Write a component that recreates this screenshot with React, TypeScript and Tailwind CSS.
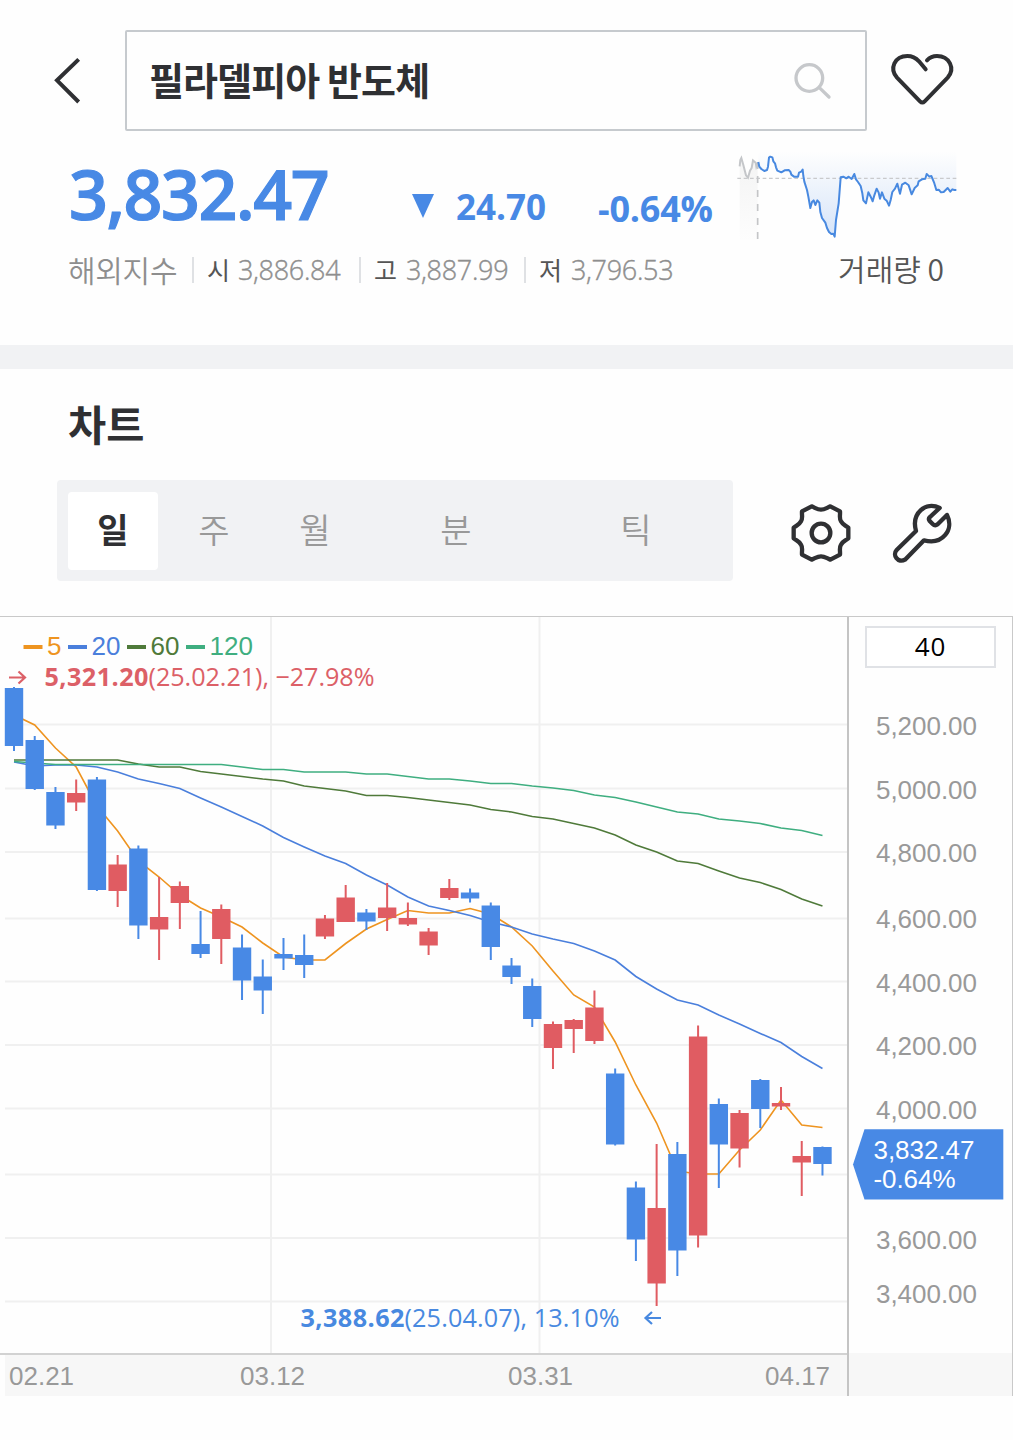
import { useState } from "react";

// [direction, high, body top, body bottom, low]
type Candle = ["up" | "down", number, number, number, number];

const candles: Candle[] = [
    ["down", 687, 688, 746, 751],
    ["down", 736, 740, 789, 790],
    ["down", 787, 792, 825.5, 829],
    ["up", 779.5, 793, 802.5, 811],
    ["down", 777, 779.5, 890, 891],
    ["up", 855, 864.5, 891, 907],
    ["down", 845.5, 848.5, 925.5, 939],
    ["up", 877, 917, 929.5, 960],
    ["up", 881.5, 886, 903, 929],
    ["down", 911, 944, 954, 958],
    ["up", 904.5, 909, 939, 964],
    ["down", 934.5, 947.5, 980.5, 1000],
    ["down", 959.5, 976.5, 990.5, 1014],
    ["down", 938, 954, 958.5, 970],
    ["down", 934.5, 955, 965, 978],
    ["up", 915, 918.5, 936.5, 939],
    ["up", 885, 897.5, 922, 922],
    ["down", 909, 912.5, 921.5, 930],
    ["up", 883, 907.5, 918, 931],
    ["up", 902.5, 918, 924.5, 926],
    ["up", 928, 931.5, 945.5, 955],
    ["up", 879, 888, 898, 900],
    ["down", 888.5, 892.5, 898.5, 902.5],
    ["down", 902.5, 905.5, 947, 960],
    ["down", 958, 965.5, 977, 984],
    ["down", 978.5, 986, 1019, 1027],
    ["up", 1021.5, 1024, 1048, 1069],
    ["up", 1019, 1020, 1029, 1053],
    ["up", 990.5, 1007.5, 1041, 1044],
    ["down", 1068.5, 1073.5, 1144.5, 1145.5],
    ["down", 1181.5, 1187.5, 1239.5, 1261],
    ["up", 1144, 1208, 1283.5, 1306],
    ["down", 1142, 1154, 1250.5, 1276],
    ["up", 1025.5, 1036.5, 1235.5, 1247.5],
    ["down", 1098.5, 1104, 1144.5, 1188],
    ["up", 1110, 1113, 1148.5, 1167.5],
    ["down", 1079, 1080, 1109, 1128],
    ["up", 1087, 1103, 1106.5, 1110],
    ["up", 1141, 1156, 1162.5, 1196],
    ["down", 1146.5, 1147, 1164, 1175.5],
];

const averages = [
    {
        period: "5", color: "#ee9420", swatch: 23.5, label: 47,
        points: [715, 725, 748, 767, 806, 831, 861, 877, 895, 908, 917, 927, 943, 957, 960, 960, 943.5, 929, 919.5, 910.5, 913, 913, 908.5, 914, 927, 946, 971, 995, 1007, 1042, 1085, 1123, 1171, 1174, 1174, 1150, 1130, 1100, 1125, 1127.5],
    },
    {
        period: "20", color: "#4a7fdc", swatch: 68, label: 91.5,
        points: [762, 766, 765, 765, 767, 772, 779, 783.5, 788.5, 798, 807, 816.5, 826, 837.5, 847, 856, 863.5, 875, 885, 897, 906, 910.5, 915.5, 922, 927, 934, 939, 943.5, 951, 960, 976.5, 989, 1000, 1005, 1015, 1024, 1033.5, 1042.5, 1056.5, 1068.5],
    },
    {
        period: "60", color: "#4f7a3a", swatch: 127, label: 150.5,
        points: [760, 760, 760, 760, 760, 760, 764, 767, 767, 771.5, 774, 776.5, 779, 781, 786, 788.5, 791, 795.5, 795.5, 797.5, 800, 802.5, 805, 809.5, 812, 816.5, 819, 823.5, 828, 835, 845, 852, 861, 863.5, 871, 878, 882.5, 889.5, 899, 906],
    },
    {
        period: "120", color: "#3fae80", swatch: 186, label: 209.5,
        points: [761.5, 763, 764.5, 764.5, 764.5, 764.5, 764.5, 764.5, 764.5, 764.5, 764.5, 767, 769.5, 769.5, 772, 772, 772, 774, 774, 776.5, 779, 779, 781, 783.5, 783.5, 786, 788, 790.5, 795, 797.5, 802, 807, 812, 814, 819, 821, 823.5, 828, 830.5, 835.5],
    },
];

const gridRows = [724.5, 788.5, 852, 918.5, 981.5, 1045, 1108.5, 1174.5, 1238, 1301.5];
const gridCols = [271, 539.5];

const priceTicks = [
    { label: "5,200.00", y: 735 },
    { label: "5,000.00", y: 799 },
    { label: "4,800.00", y: 862 },
    { label: "4,600.00", y: 928 },
    { label: "4,400.00", y: 992 },
    { label: "4,200.00", y: 1055 },
    { label: "4,000.00", y: 1119 },
    { label: "3,600.00", y: 1248.5 },
    { label: "3,400.00", y: 1303 },
];

const tabs = [
    { label: "일", width: "w-[90px]" },
    { label: "주", width: "w-[112px]" },
    { label: "월", width: "w-[90px]" },
    { label: "분", width: "w-[192px]" },
    { label: "틱", width: "w-[168px]" },
];

const candleX = (i: number) => 14 + i * 20.73;

const NUM = "font-['Open_Sans','Noto_Sans_CJK_KR',sans-serif]";
const DETAIL = "pb-[2px] tracking-[-0.3px] font-light [-webkit-text-stroke:0.4px_#8e8e8e]";

const SPARK =
    "115,66 118,80 124,87 133,93 141,90 144,80 147,53 151,50 157,52 160,64 165,70 168,82 172,92 184,97 194,91 206,90 211,95 214,104 222,110 234,110 237,98 244,95 248,89 250,108 253,125 261,150 265,170 271,204 276,186 281,181 286,195 292,181 298,188 301,216 306,234 316,248 321,264 327,276 334,282 340,281 344,290 348,240 356,190 362,112 370,110 379,115 386,110 395,117 403,102 408,118 414,126 422,138 427,160 430,181 438,190 445,157 452,170 458,184 463,166 470,146 476,158 480,176 486,157 493,176 500,182 507,197 512,180 517,156 525,146 532,131 540,161 546,134 556,128 566,136 575,163 584,144 593,136 596,124 606,118 616,116 620,102 628,110 634,108 642,127 649,150 656,149 663,157 671,156 683,144 691,155 697,148 703,150 709,150";

function Sparkline() {
    return (
        <svg className="w-[250px] h-[110px]" viewBox="0 0 750 330" fill="none">
            <defs>
                <linearGradient id="fall" x1="0" y1="35" x2="0" y2="290" gradientUnits="userSpaceOnUse">
                    <stop offset="0" stopColor="#4889e5" stopOpacity="0" />
                    <stop offset="1" stopColor="#4889e5" stopOpacity="0.22" />
                </linearGradient>
                <linearGradient id="pre" x1="0" y1="60" x2="0" y2="300" gradientUnits="userSpaceOnUse">
                    <stop offset="0" stopColor="#999" stopOpacity="0.1" />
                    <stop offset="1" stopColor="#999" stopOpacity="0.01" />
                </linearGradient>
            </defs>
            <polygon points={`115,20 ${SPARK} 709,20`} fill="url(#fall)" />
            <path d="M59 78 L64 54 L78 108 L85 113 L91 90 L98 62 L108 68 L113 82 V300 H59Z" fill="url(#pre)" />
            <path d="M52 115H709" stroke="#c9cacc" strokeWidth="4" strokeDasharray="11 8" />
            <path d="M113 66V300" stroke="#c4c5c7" strokeWidth="5" strokeDasharray="21 21" />
            <path d="M59 79 L61 60 L64 54 L70 75 L78 106 L84 113 L90 92 L95 84 L99 61 L107 68 L109 80 L113 70" stroke="#c4c6c9" strokeWidth="6" />
            <polyline points={SPARK} stroke="#4889e0" strokeWidth="6" strokeLinejoin="round" />
        </svg>
    );
}

function CandleChart() {
    return (
        <svg className="w-[847px] h-[736px] shrink-0" viewBox="0 617 847 736" fill="none">
            <g stroke="#f0f0f0" strokeWidth="2">
                {gridRows.map(y => <path key={y} d={`M5 ${y}H847`} />)}
                {gridCols.map(x => <path key={x} d={`M${x} 617V1354`} />)}
            </g>

            {averages.map(ma => (
                <polyline
                    key={ma.period}
                    points={ma.points.map((y, i) => `${candleX(i)},${y}`).join(" ")}
                    stroke={ma.color}
                    strokeWidth="1.6"
                />
            ))}

            {candles.map(([dir, high, top, bottom, low], i) => (
                <g key={i} fill={dir === "up" ? "#e05c62" : "#4889e5"}>
                    <rect x={candleX(i) - 1} y={high} width="2" height={low - high} />
                    <rect x={candleX(i) - 9.2} y={top} width="18.4" height={bottom - top} />
                </g>
            ))}

            <g className="font-['Liberation_Sans',Arial,sans-serif]" fontSize="26">
                {averages.map(ma => (
                    <g key={ma.period} fill={ma.color}>
                        <rect x={ma.swatch} y="645" width="19" height="4" />
                        <text x={ma.label} y="655">{ma.period}</text>
                    </g>
                ))}
            </g>

            {/* Highest / lowest markers */}
            <g className={NUM} fontSize="25.2">
                <path d="M9 677.5H25M18.5 671.5L25 677.5L18.5 683.5" stroke="#dc6067" strokeWidth="2.2" />
                <g fill="#dc6067">
                    <text x="44.5" y="686" fontWeight="700" textLength="104">5,321.20</text>
                    <text x="148.5" y="686" textLength="226">(25.02.21), −27.98%</text>
                </g>
                <g fill="#4889e0">
                    <text x="300.5" y="1326.5" fontWeight="700" textLength="104">3,388.62</text>
                    <text x="404.5" y="1326.5" textLength="215">(25.04.07), 13.10%</text>
                </g>
                <path d="M661 1318H645.5M652 1312L645.5 1318L652 1324" stroke="#4889e0" strokeWidth="2.2" />
            </g>
        </svg>
    );
}

function PriceAxis() {
    return (
        <div className="relative w-[163px]">
            <svg className="w-[162px] h-[736px] font-['Liberation_Sans',Arial,sans-serif]" viewBox="849 617 162 736" fontSize="26">
                <g fill="#999">
                    {priceTicks.map(t => <text key={t.label} x="876" y={t.y} textLength="101">{t.label}</text>)}
                </g>
                <polygon points="853,1164.5 864.5,1129.3 1003.3,1129.3 1003.3,1199.5 864.5,1199.5" fill="#4889e5" />
                <g fill="#fff">
                    <text x="873.5" y="1159" textLength="101">3,832.47</text>
                    <text x="873.5" y="1188" textLength="82">-0.64%</text>
                </g>
            </svg>
            <div className={`absolute left-4 top-[9px] w-[131px] h-[42px] border-2 border-[#e0e2e6] bg-white text-center text-[26px] leading-[36px] tracking-[1px] text-black ${NUM}`}>40</div>
        </div>
    );
}

export default function App() {
    const [activeTab, setActiveTab] = useState("일");

    return (
        <div className="w-[1013px] h-[1440px] overflow-hidden bg-[#fefefe] font-['Noto_Sans_CJK_KR',sans-serif] text-[#2f3033]">
            {/* Search header */}
            <header className="flex items-start h-[140px] pt-[30px]">
                <button className="ml-[53px] mt-[26px]">
                    <svg className="w-[30px] h-[50px]" viewBox="159 168 90 150" fill="none" stroke="#2f3033" strokeWidth="12">
                        <path d="M236 178L171 241L236 306" />
                    </svg>
                </button>
                <div className="ml-[42px] w-[742px] h-[101px] border-2 border-[#c6cace] rounded-[2px] flex items-center justify-between pl-[22px] pr-[33px]">
                    <span className="pb-[4px] text-[38px] leading-none font-bold tracking-[-0.9px]">필라델피아 반도체</span>
                    <svg className="w-[40px] h-[40px]" viewBox="855 185 120 120" fill="none" stroke="#c6c8cb" strokeWidth="10" strokeLinecap="round">
                        <circle cx="907" cy="236" r="40" />
                        <path d="M937 265L966 293" />
                    </svg>
                </div>
                <button className="ml-[20px] mt-[19px]">
                    <svg className="w-[70px] h-[60px]" viewBox="1140 147 210 180" fill="none" stroke="#2f3033" strokeWidth="12" strokeLinecap="round" strokeLinejoin="round">
                        <path d="M1256 208L1236 184C1225 172 1214 168 1201 168C1163 168 1146 206 1170 233L1239 304Q1246 311 1253 304L1322 233C1346 206 1327 168 1290 168Q1272 168 1260 181" />
                    </svg>
                </button>
            </header>

            {/* Current price */}
            <section className={`flex items-start h-[110px] pl-[69px] font-bold leading-none text-[#4889e5] ${NUM}`}>
                <span className="w-[343px] mt-[20px] text-[68px] leading-none font-semibold tracking-[-1.4px] [-webkit-text-stroke:1.2px_#4889e5]">3,832.47</span>
                <svg className="w-[22px] h-[24px] mt-[54px]" viewBox="0 0 22 24">
                    <polygon points="0,0 22,0 11,24" fill="#4889e5" />
                </svg>
                <span className="ml-[22px] w-[142px] mt-[49px] text-[35px] leading-none">24.70</span>
                <span className="w-[122px] mt-[51px] text-[36px] leading-none tracking-[-0.2px]">-0.64%</span>
                <Sparkline />
            </section>

            <section className="flex items-center h-[40px] pl-[68px] pr-[69px] text-[27px] leading-none text-[#8e8e8e]">
                <span className="w-[124px] pb-[3px] text-[30px] leading-none tracking-[-0.3px] font-[350]">해외지수</span>
                <span className="w-[2px] h-[26px] bg-[#dfe1e4]" />
                <span className="ml-[13px] w-[31px] pb-[2px] text-[25px] text-[#555]">시</span>
                <span className={`w-[121px] ${DETAIL} ${NUM}`}>3,886.84</span>
                <span className="w-[2px] h-[26px] bg-[#dfe1e4]" />
                <span className="ml-[13px] w-[32px] pb-[2px] text-[25px] text-[#555]">고</span>
                <span className={`w-[118px] ${DETAIL} ${NUM}`}>3,887.99</span>
                <span className="w-[2px] h-[26px] bg-[#dfe1e4]" />
                <span className="ml-[13px] w-[32px] pb-[2px] text-[25px] text-[#555]">저</span>
                <span className={`${DETAIL} ${NUM}`}>3,796.53</span>
                <span className="ml-auto pb-[4px] text-[30px] leading-none text-[#555] font-[350]">거래량 0</span>
            </section>

            <div className="mt-[55px] h-[24px] bg-[#f1f2f4]" />

            <h2 className="ml-[68px] mt-[34px] h-[43px] text-[41.5px] leading-none font-bold">차트</h2>

            {/* Period tabs and chart tools */}
            <div className="mt-[34px] flex items-center">
                <div className="ml-[57px] w-[676px] h-[101px] rounded-[4px] bg-[#f1f2f4] flex items-center pl-[11px]">
                    {tabs.map(tab => (
                        <button
                            key={tab.label}
                            onClick={() => setActiveTab(tab.label)}
                            className={`${tab.width} h-[78px] pb-[4px] rounded-[4px] text-[34px] leading-none ${activeTab === tab.label ? "bg-white font-bold" : "font-[350] text-[#999]"}`}
                        >
                            {tab.label}
                        </button>
                    ))}
                </div>
                <svg className="ml-[56px] mt-[4px] w-[64px] h-[64px]" viewBox="-96 -96 192 192" fill="none" stroke="#2f3033" strokeWidth="13" strokeLinejoin="round">
                    <path d="M28 -80L57 -65C58 -52 54 -44 60 -35C65 -25 72 -24 82 -16L82 16C72 24 65 25 60 35C54 44 58 52 57 65L28 80C16 75 11 70 0 70C-11 70 -16 75 -28 80L-57 65C-58 52 -54 44 -60 35C-65 25 -72 24 -82 16L-82 -16C-72 -24 -65 -25 -60 -35C-54 -44 -58 -52 -57 -65L-28 -80C-16 -75 -11 -70 0 -70C11 -70 16 -75 28 -80Z" />
                    <circle r="28" />
                </svg>
                <svg className="ml-[37px] mt-[4px] w-[64px] h-[64px]" viewBox="392 62 192 192" fill="none" stroke="#2f3033" strokeWidth="13" strokeLinejoin="round">
                    <path d="M541 83C500 62 455 98 470 152L412 209C398 224 416 250 437 238L494 180C550 195 585 147 563 104L535 132Q527 138 520 131L511 122Q506 115 512 110Z" />
                </svg>
            </div>

            {/* Chart */}
            <div className="mt-[35px] border-t border-[#c9c9c9]">
                <div className="flex border-r border-[#c9c9c9]">
                    <CandleChart />
                    <div className="w-[2px] bg-[#c4c4c4]" />
                    <PriceAxis />
                </div>
                <div className="flex h-[43px] border-r border-[#c9c9c9] font-['Liberation_Sans',Arial,sans-serif] text-[26px] leading-[43px] text-[#999]">
                    <div className="w-[847px] pl-[5px] border-t-2 border-[#d2d2d2]">
                        <div className="flex h-full bg-[#f7f7f7] pl-[4px]">
                            <span className="w-[231px]">02.21</span>
                            <span className="w-[268px]">03.12</span>
                            <span className="w-[257px]">03.31</span>
                            <span>04.17</span>
                        </div>
                    </div>
                    <div className="w-[2px] bg-[#c4c4c4]" />
                    <div className="flex-1 bg-[#f7f7f7]" />
                </div>
            </div>
        </div>
    );
}
